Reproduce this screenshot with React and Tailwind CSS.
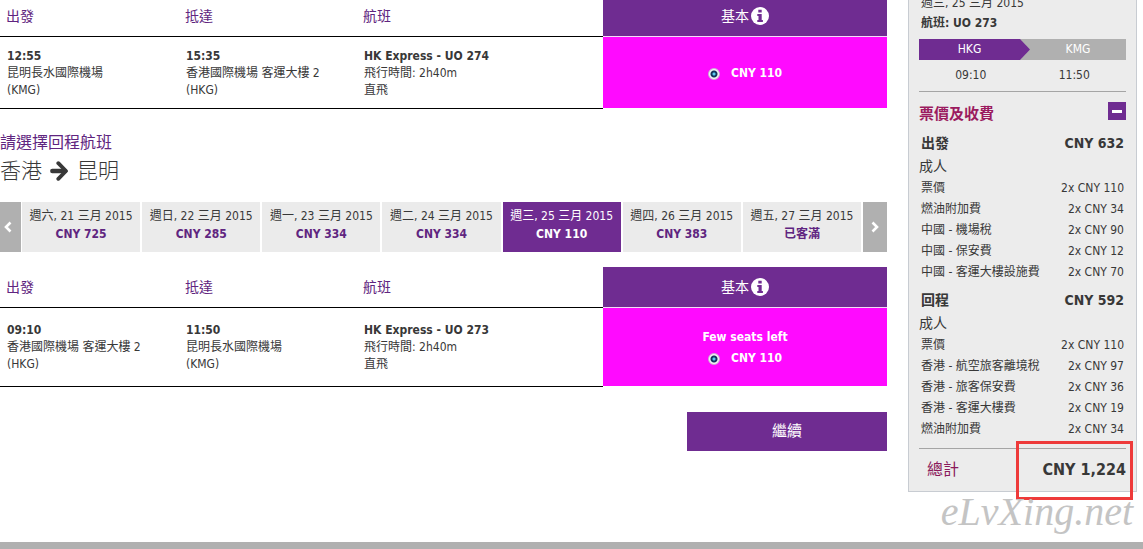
const DATES = [
  { date: "週六, 21 三月 2015", price: "CNY 725" },
  { date: "週日, 22 三月 2015", price: "CNY 285" },
  { date: "週一, 23 三月 2015", price: "CNY 334" },
  { date: "週二, 24 三月 2015", price: "CNY 334" },
  { date: "週三, 25 三月 2015", price: "CNY 110", selected: true },
  { date: "週四, 26 三月 2015", price: "CNY 383" },
  { date: "週五, 27 三月 2015", price: "已客滿" },
];

const FEES = [
  {
    title: "出發",
    total: "CNY 632",
    items: [
      ["票價", "2x CNY 110"],
      ["燃油附加費", "2x CNY 34"],
      ["中國 - 機場稅", "2x CNY 90"],
      ["中國 - 保安費", "2x CNY 12"],
      ["中國 - 客運大樓設施費", "2x CNY 70"],
    ],
  },
  {
    title: "回程",
    total: "CNY 592",
    items: [
      ["票價", "2x CNY 110"],
      ["香港 - 航空旅客離境稅", "2x CNY 97"],
      ["香港 - 旅客保安費", "2x CNY 36"],
      ["香港 - 客運大樓費", "2x CNY 19"],
      ["燃油附加費", "2x CNY 34"],
    ],
  },
];

function InfoIcon() {
  return (
    <svg className="size-[18px]" viewBox="0 0 18 18">
      <circle cx="9" cy="9" r="9" fill="#fff" />
      <path d="M7.300 2.800h3.400v2.600H7.300zM6.300 7h4.400v6h1.200v2H6.300v-2h1.200V9H6.300z" fill="#6f2c91" />
    </svg>
  );
}

function ArrowIcon() {
  return (
    <svg className="h-5 w-[19px]" viewBox="0 0 19 20" fill="none" stroke="currentColor" strokeWidth="4.400">
      <path d="M2.300 10H15" strokeLinecap="round" />
      <path d="M8.300 2.200 16 10l-7.700 7.800" strokeLinejoin="round" strokeLinecap="round" strokeWidth="3.800" />
    </svg>
  );
}

function Chevron({ direction }) {
  return (
    <svg className="h-3 w-2" viewBox="0 0 8 12" fill="none" stroke="currentColor" strokeWidth="2.600">
      <path d={direction === "left" ? "M6.500 1.500 2 6l4.500 4.500" : "M1.500 1.500 6 6l-4.500 4.500"} />
    </svg>
  );
}

function FlightTable({ name, flight, rowClass }) {
  return (
    <table className="w-full table-fixed border-separate border-spacing-0 text-left">
      <colgroup>
        <col className="w-[179px]" />
        <col className="w-[178px]" />
        <col />
        <col className="w-[284px]" />
      </colgroup>
      <thead>
        <tr className="h-[41px] text-sm text-[#5f2580]">
          <th className="border-b border-black pl-1.5 font-normal">出發</th>
          <th className="border-b border-black pl-1.5 font-normal">抵達</th>
          <th className="border-b border-black pl-1.5 font-normal">航班</th>
          <th className="border-b border-[#f3d9f7] bg-[#6f2c91] font-normal text-white">
            <span className="flex items-center justify-center gap-0.5">
              基本
              <InfoIcon />
            </span>
          </th>
        </tr>
      </thead>
      <tbody>
        <tr className={rowClass}>
          <td className="border-b border-black pl-[7px] pt-px">
            <strong className="block">{flight.departs}</strong>
            {flight.from}
            <br />({flight.fromCode})
          </td>
          <td className="border-b border-black pl-[7px] pt-px">
            <strong className="block">{flight.arrives}</strong>
            {flight.to}
            <br />({flight.toCode})
          </td>
          <td className="border-b border-black pl-[7px] pt-px">
            <strong className="block">{flight.number}</strong>
            飛行時間: 2h40m
            <br />
            直飛
          </td>
          <td className="border-b border-white bg-[#ff0aff] pt-0.5 text-center font-bold leading-[21px] text-white">
            {flight.note && <div>{flight.note}</div>}
            <label className="flex items-center justify-center gap-[11px]">
              <input
                type="radio"
                name={name}
                defaultChecked
                className="size-3 appearance-none rounded-full border border-[#c9b4d2] bg-[radial-gradient(circle,#5cc8ee_0_1px,#12365f_2px,#12365f_3px,#f4f4f4_4px)]"
              />
              CNY 110
            </label>
          </td>
        </tr>
      </tbody>
    </table>
  );
}

function DateStrip() {
  return (
    <div className="flex h-[50px]">
      <button aria-label="Previous dates" className="flex w-[21px] items-center bg-[#b0b0b0] pl-1 text-white">
        <Chevron direction="left" />
      </button>
      <div className="ml-px mr-0.5 grid flex-1 grid-cols-7 gap-0.5">
        {DATES.map((d) => (
          <button
            key={d.date}
            className={
              d.selected
                ? "whitespace-nowrap bg-[#6f2c91] pb-2 pt-1 leading-[18px] text-white"
                : "whitespace-nowrap bg-[#ebebeb] pb-2 pt-1 leading-[18px]"
            }
          >
            <span className="block">{d.date}</span>
            <strong className={d.selected ? "block" : "block text-[#5f2580]"}>{d.price}</strong>
          </button>
        ))}
      </div>
      <button aria-label="Next dates" className="flex w-6 items-center justify-center bg-[#b0b0b0] text-white">
        <Chevron direction="right" />
      </button>
    </div>
  );
}

function FeeGroup({ group }) {
  return (
    <section className="mt-1.5">
      <h3 className="flex justify-between px-0.5 text-sm font-bold leading-[22px]">
        <span>{group.title}</span>
        <span>{group.total}</span>
      </h3>
      <p className="text-sm leading-6">成人</p>
      <dl>
        {group.items.map(([label, price]) => (
          <div key={label} className="flex justify-between px-0.5 leading-[21px]">
            <dt>{label}</dt>
            <dd>{price}</dd>
          </div>
        ))}
      </dl>
    </section>
  );
}

function Summary() {
  return (
    <aside className="-mt-2 w-[229px] shrink-0 self-start border border-[#c8ccd2] bg-[#ececec] px-2.5">
      <p className="px-0.5 leading-5">週三, 25 三月 2015</p>
      <p className="px-0.5 font-bold leading-5">航班: UO 273</p>
      <div className="mt-1.5 flex h-[21px] bg-[#b0b0b0] text-center leading-[21px] text-white">
        <span className="w-[101px] bg-[#6f2c91]">HKG</span>
        <svg className="h-full w-2.5" viewBox="0 0 10 21" preserveAspectRatio="none" fill="#6f2c91">
          <path d="M0 0 10 10.500 0 21z" />
        </svg>
        <span className="flex-1">KMG</span>
      </div>
      <div className="grid grid-cols-2 border-b border-[#a5a5a5] text-center leading-[31px]">
        <span>09:10</span>
        <span>11:50</span>
      </div>
      <div className="flex items-start justify-between pt-2.5">
        <h2 className="text-[15px] font-bold leading-6 text-[#9b1b5f]">票價及收費</h2>
        <button aria-label="Collapse" className="flex size-[18px] items-center justify-center bg-[#6f2c91]">
          <span className="h-[3px] w-2.5 bg-white" />
        </button>
      </div>
      {FEES.map((g) => (
        <FeeGroup key={g.title} group={g} />
      ))}
      <div className="relative mt-2 flex h-[43px] items-center justify-between border-t border-[#a5a5a5] pl-2 text-base">
        <span className="text-[#8b1a5b]">總計</span>
        <strong>CNY 1,224</strong>
        <div className="absolute -bottom-[9px] -right-[7px] -top-2 w-[117px] border-3 border-[#ee3a3a]" />
      </div>
    </aside>
  );
}

export default function App() {
  return (
    <div className="relative flex min-h-screen flex-col overflow-hidden bg-white font-['DejaVu_Sans_Condensed','Noto_Sans_CJK_TC',sans-serif] text-xs leading-[17px] text-[#383838]">
      <div className="flex flex-1 gap-[21px] pr-1.5">
        <main className="-mt-1 flex-1">
          <FlightTable
            name="outbound"
            rowClass="h-[72px]"
            flight={{
              departs: "12:55",
              from: "昆明長水國際機場",
              fromCode: "KMG",
              arrives: "15:35",
              to: "香港國際機場 客運大樓 2",
              toCode: "HKG",
              number: "HK Express - UO 274",
            }}
          />
          <h2 className="mt-[22px] text-base leading-6 text-[#5f2580]">請選擇回程航班</h2>
          <h1 className="mb-[15px] flex items-center gap-2 text-[21px] font-light leading-8">
            香港
            <ArrowIcon />
            昆明
          </h1>
          <DateStrip />
          <div className="mt-[15px]">
            <FlightTable
              name="return"
              rowClass="h-[79px]"
              flight={{
                departs: "09:10",
                from: "香港國際機場 客運大樓 2",
                fromCode: "HKG",
                arrives: "11:50",
                to: "昆明長水國際機場",
                toCode: "KMG",
                number: "HK Express - UO 273",
                note: "Few seats left",
              }}
            />
          </div>
          <button className="ml-auto mt-[25px] block h-[39px] w-[200px] bg-[#6f2c91] text-[15px] text-white">繼續</button>
        </main>
        <Summary />
      </div>
      <div className="absolute bottom-3.5 right-2.5 font-['Liberation_Serif',serif] text-[40px] italic leading-[46px] text-[#c4c4c4]">
        eLvXing.net
      </div>
      <footer className="h-[7px] bg-[#b0b0b0]" />
    </div>
  );
}
